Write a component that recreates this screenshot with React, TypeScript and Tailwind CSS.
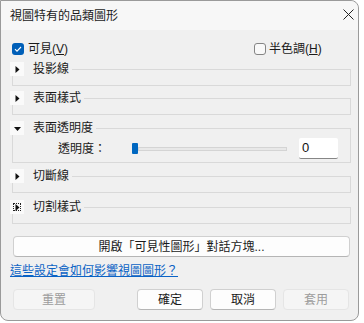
import type { ReactNode } from "react";

const FONT = "font-['Liberation_Sans','Noto_Sans_CJK_TC',sans-serif]";

function Toggle({ open, focus }: { open?: boolean; focus?: boolean }) {
  return (
    <span
      className={
        "flex h-[14px] w-[14px] items-center justify-center bg-[#fafafa] " +
        (focus ? "outline outline-1 outline-dotted outline-offset-[-4px] outline-[#222]" : "")
      }
    >
      {open ? (
        <svg width="7" height="7" viewBox="0 0 7 7">
          <path d="M0 2h7L3.5 6z" fill="#111" />
        </svg>
      ) : (
        <svg width="7" height="7" viewBox="0 0 7 7">
          <path d="M1.5 0v7L5.5 3.5z" fill="#111" />
        </svg>
      )}
    </span>
  );
}

function Group({
  title,
  open,
  focus,
  className,
  children,
}: {
  title: string;
  open?: boolean;
  focus?: boolean;
  className: string;
  children?: ReactNode;
}) {
  return (
    <fieldset className={"ml-[11px] w-[339px] border border-[#d9d9d9] " + className}>
      <legend className="-ml-[3px] pr-[3px]">
        <div className="flex h-[14px] items-center">
          <Toggle open={open} focus={focus} />
          <span className="ml-[9px] text-[12px] leading-[14px] text-[#1a1a1a]">{title}</span>
        </div>
      </legend>
      {children ?? <div className="h-[9px]" />}
    </fieldset>
  );
}

function Btn({
  label,
  disabled,
  className,
}: {
  label: string;
  disabled?: boolean;
  className: string;
}) {
  return (
    <button
      className={
        "flex h-[21px] items-center justify-center rounded-[4px] border text-[12px] leading-[14px] " +
        (disabled
          ? "border-[#e5e5e5] bg-[#f5f5f5] text-[#9d9d9d] "
          : "border-[#d0d0d0] border-b-[#b5b5b5] bg-[#fdfdfd] text-[#1a1a1a] ") +
        className
      }
    >
      {label}
    </button>
  );
}

export default function App() {
  return (
    <div className={"h-[323px] w-[364px] bg-white " + FONT}>
      <div className="flex h-[321px] w-[359px] flex-col rounded-tr-lg rounded-b-lg border border-[#9a9a9a] bg-[#f0f0f0]">
        {/* Title bar */}
        <div className="flex h-[29px] shrink-0 items-center justify-between rounded-tr-lg bg-[#f7f7f7] pl-[9px] pr-[4px]">
          <span className="text-[12px] leading-[14px] text-[#1a1a1a]">視圖特有的品類圖形</span>
          <svg width="11" height="11" viewBox="0 0 11 11" className="mb-[2px]">
            <path d="M0.5 0.5l10 10M10.5 0.5l-10 10" stroke="#222" strokeWidth="1" />
          </svg>
        </div>

        {/* Checkboxes */}
        <div className="mt-[12px] flex h-[14px] items-center pl-[11px]">
          <label className="flex w-[242px] items-center">
            <span className="flex h-[12px] w-[12px] items-center justify-center rounded-[3px] bg-[#005fb8]">
              <svg width="8" height="8" viewBox="0 0 8 8">
                <path d="M1 4.2l2 2L7 2" stroke="white" strokeWidth="1.1" fill="none" />
              </svg>
            </span>
            <span className="ml-[4px] text-[12px] leading-[14px] text-[#1a1a1a]">
              可見(<span className="underline">V</span>)
            </span>
          </label>
          <label className="flex items-center">
            <span className="h-[12px] w-[12px] rounded-[3px] border border-[#858585] bg-[#f9f9f9]" />
            <span className="ml-[3px] text-[12px] leading-[14px] text-[#1a1a1a]">
              半色調(<span className="underline">H</span>)
            </span>
          </label>
        </div>

        <Group title="投影線" className="mt-[6px]" />
        <Group title="表面樣式" className="mt-[5px]" />
        <Group title="表面透明度" open className="mt-[6px]">
          <div className="flex h-[27px] items-center">
            <span className="ml-[45px] w-[74px] text-[12px] leading-[14px] text-[#1a1a1a]">透明度：</span>
            <div className="flex w-[155px] items-center">
              <span className="h-[11px] w-[6px] rounded-[1px] bg-[#0067c0]" />
              <span className="h-[4px] flex-1 border border-[#d4d4d4] bg-[#e8e8e8]" />
            </div>
            <div className="ml-[12px] flex h-[21px] w-[39px] items-center rounded-[2px] border-b border-[#868686] bg-white pl-[3px] text-[13px] leading-[14px] text-[#111]">
              0
            </div>
          </div>
        </Group>
        <Group title="切斷線" className="mt-[6px]" />
        <Group title="切割樣式" focus className="mt-[7px]" />

        <Btn label="開啟「可見性圖形」對話方塊..." className="ml-[12px] mt-[12px] w-[337px]" />

        <a href="#" className="ml-[9px] mt-[7px] block self-start text-[12px] leading-[14px] text-[#0b63c5] underline">
          這些設定會如何影響視圖圖形？
        </a>

        <div className="mt-[11px] flex pl-[12px]">
          <Btn label="重置" disabled className="w-[82px]" />
          <Btn label="確定" className="ml-[42px] w-[66px]" />
          <Btn label="取消" className="ml-[7px] w-[66px]" />
          <Btn label="套用" disabled className="ml-[7px] w-[66px]" />
        </div>
      </div>
    </div>
  );
}
